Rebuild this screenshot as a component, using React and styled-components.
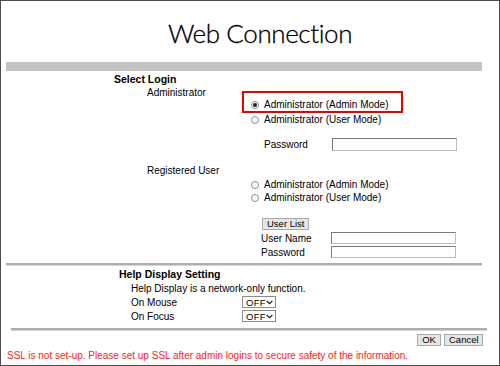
import React from 'react';
import styled, { createGlobalStyle } from 'styled-components';

const Global = createGlobalStyle`
  html, body { margin: 0; padding: 0; background: #fff; }
  body { font-family: "Liberation Sans", Arial, sans-serif; font-size: 10px; color: #000; }
`;

const Frame = styled.div`
  width: 500px;
  height: 366px;
  box-sizing: border-box;
  border: 1px solid #4d4d4d;
  display: flex;
  flex-direction: column;
  overflow: hidden;
`;

const Title = styled.h1`
  margin: 0;
  height: 60px;
  display: flex;
  align-items: center;
  justify-content: center;
  padding: 4px 0 0 20px;
  box-sizing: border-box;
  font-family: Lato, "DejaVu Sans", sans-serif;
  font-weight: 300;
  font-size: 26px;
  letter-spacing: -0.4px;
  color: #000;
  -webkit-text-stroke: 0.3px #000;
`;

const Bar = styled.div`
  margin: 1px 0 0 5px;
  width: 476px;
  height: 9px;
  background: #c3c3c3;
`;

const Rule = styled.div`
  margin: ${p => p.$top}px 0 0 ${p => p.$left}px;
  width: 476px;
  height: 2px;
  background: #adadad;
  border-bottom: 1px solid #d6d6d6;
`;

const Heading = styled.div`
  margin: ${p => p.$top || 0}px 0 0 ${p => p.$left}px;
  height: 14px;
  line-height: 14px;
  font-weight: bold;
  font-size: 10.5px;
`;

const Group = styled.div`
  display: flex;
  margin-top: ${p => p.$top || 0}px;
`;

const GroupLabel = styled.div`
  margin-left: 146px;
  width: 95px;
  height: 13px;
  line-height: 13px;
`;

const GroupBody = styled.div`
  display: flex;
  flex-direction: column;
  padding-top: ${p => p.$top || 0}px;
`;

const Highlight = styled.div`
  margin-top: 5px;
  width: 150px;
  border: 2px solid #ee0000;
  padding: 5px 0 0 7px;
`;

const Option = styled.label`
  display: flex;
  align-items: center;
  gap: 5px;
  height: 13px;
  line-height: 13px;
  padding-left: ${p => p.$indent || 0}px;
  white-space: nowrap;
`;

const Radio = styled.span`
  width: 8px;
  height: 8px;
  box-sizing: border-box;
  border-radius: 50%;
  border: 1px solid #8a8a8a;
  background: #fff;
  display: flex;
  align-items: center;
  justify-content: center;
  &::after {
    content: '';
    width: 4px;
    height: 4px;
    border-radius: 50%;
    background: ${p => (p.$checked ? '#222' : 'transparent')};
  }
`;

const Field = styled.div`
  display: flex;
  align-items: center;
  height: ${p => p.$h || 14}px;
  margin-top: ${p => p.$top || 0}px;
  padding-left: ${p => p.$indent || 0}px;
`;

const FieldLabel = styled.span`
  width: ${p => p.$w}px;
  white-space: nowrap;
`;

const TextBox = styled.div`
  width: ${p => p.$w || 125}px;
  height: ${p => p.$h || 12}px;
  box-sizing: border-box;
  border: 1px solid #7a7a7a;
  border-right-color: #bdbdbd;
  border-bottom-color: #bdbdbd;
  background: #fff;
`;

const Button = styled.button`
  margin: ${p => p.$top || 0}px 0 0 ${p => p.$left || 0}px;
  width: ${p => (p.$w ? `${p.$w}px` : 'auto')};
  height: 12px;
  padding: 0 4px;
  box-sizing: border-box;
  font-family: "Liberation Sans", Arial, sans-serif;
  font-size: 9.5px;
  line-height: 10px;
  color: #000;
  background: #e6e6e6;
  border: 1px solid;
  border-color: #fff #6e6e6e #6e6e6e #fff;
  outline: 1px solid #a8a8a8;
  outline-offset: -1px;
  align-self: flex-start;
`;

const Text = styled.div`
  margin: ${p => p.$top || 0}px 0 0 ${p => p.$left}px;
  height: 13px;
  line-height: 13px;
  color: ${p => p.$color || '#000'};
  white-space: nowrap;
`;

const Select = styled.div`
  width: 34px;
  height: 12px;
  box-sizing: border-box;
  border: 1px solid #8a8a8a;
  display: flex;
  align-items: center;
  justify-content: space-between;
  padding: 0 2px 0 3px;
  font-size: 9.5px;
  letter-spacing: 0.3px;
  background: #fff;
`;

const Actions = styled.div`
  display: flex;
  justify-content: flex-end;
  gap: 3px;
  padding-right: 16px;
  margin-top: 3px;
`;

const Chevron = () => (
  <svg width="8" height="5" viewBox="0 0 8 5">
    <path d="M0.8 0.8 L4 3.8 L7.2 0.8" fill="none" stroke="#222" strokeWidth="1.4" />
  </svg>
);

export default function App() {
  return (
    <>
      <Global />
      <Frame>
        <Title>Web Connection</Title>
        <Bar />

        <Heading $left={113} $top={1}>Select Login</Heading>
        <Group>
          <GroupLabel>Administrator</GroupLabel>
          <GroupBody>
            <Highlight>
              <Option><Radio $checked />Administrator (Admin Mode)</Option>
            </Highlight>
            <Option $indent={9}><Radio />Administrator (User Mode)</Option>
            <Field $indent={22} $top={11}>
              <FieldLabel $w={68}>Password</FieldLabel>
              <TextBox $h={13} />
            </Field>
          </GroupBody>
        </Group>

        <Group $top={13}>
          <GroupLabel>Registered User</GroupLabel>
          <GroupBody $top={14}>
            <Option $indent={9}><Radio />Administrator (Admin Mode)</Option>
            <Option $indent={9}><Radio />Administrator (User Mode)</Option>
            <Button $left={20} $top={14}>User List</Button>
            <Field $indent={19} $top={1}>
              <FieldLabel $w={70}>User Name</FieldLabel>
              <TextBox />
            </Field>
            <Field $indent={19}>
              <FieldLabel $w={70}>Password</FieldLabel>
              <TextBox />
            </Field>
          </GroupBody>
        </Group>

        <Rule $left={5} $top={4} />

        <Heading $left={118} $top={1}>Help Display Setting</Heading>
        <Text $left={130} $top={1}>Help Display is a network-only function.</Text>
        <Field $indent={130}>
          <FieldLabel $w={111}>On Mouse</FieldLabel>
          <Select>OFF<Chevron /></Select>
        </Field>
        <Field $indent={130}>
          <FieldLabel $w={111}>On Focus</FieldLabel>
          <Select>OFF<Chevron /></Select>
        </Field>

        <Rule $left={10} $top={5} />

        <Actions>
          <Button $w={24}>OK</Button>
          <Button $w={39}>Cancel</Button>
        </Actions>
        <Text $left={6} $top={3} $color="#ff1a1a">
          SSL is not set-up. Please set up SSL after admin logins to secure safety of the information.
        </Text>
      </Frame>
    </>
  );
}
